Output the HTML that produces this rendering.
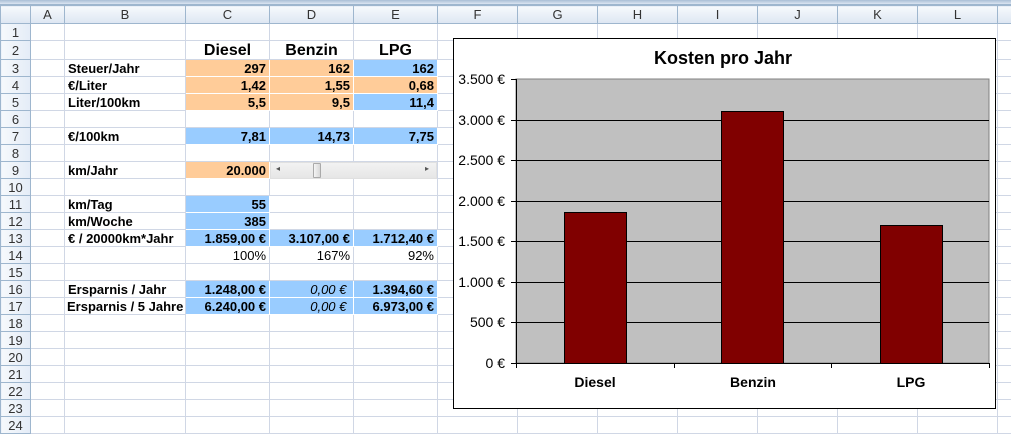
<!DOCTYPE html>
<html><head><meta charset="utf-8"><style>
*{margin:0;padding:0;box-sizing:border-box}
body{width:1011px;height:428px;overflow:hidden;background:#fff;font-family:"Liberation Sans",Arial,sans-serif;position:relative}
.top{position:absolute;left:0;top:0;width:1011px;height:5px;background:linear-gradient(#a9bed6,#dbe5f1);border-bottom:1px solid #9eb6ce}
table{position:absolute;left:0;top:5px;border-collapse:collapse;table-layout:fixed;width:1020px}
td{border:1px solid #d0d7e5;height:17px;font-size:13px;font-weight:bold;padding:0 3px;white-space:nowrap;overflow:hidden;line-height:15px;color:#000}
td.r{text-align:right}
tr.h td{background:linear-gradient(#f6f9fc,#dde6f2);border-color:#9eb6ce;font-weight:normal;text-align:center;font-size:13px;color:#333;height:18px}
td.n{background:linear-gradient(90deg,#f6f9fc,#e4ecf7);border-color:#9eb6ce;font-weight:normal;text-align:center;font-size:13px;color:#333;padding:0}
.o{background:#ffcc99}.b{background:#99ccff}
.o,.b{border-color:transparent}
td.big{font-size:16px;text-align:center;height:19px}
.i{font-style:italic;font-weight:normal}
.nb{font-weight:normal}
</style></head><body>
<div class="top"></div>
<table>
<colgroup><col style="width:30px"><col style="width:34px"><col style="width:121px"><col style="width:84px"><col style="width:84px"><col style="width:84px"><col style="width:80px"><col style="width:80px"><col style="width:80px"><col style="width:80px"><col style="width:80px"><col style="width:80px"><col style="width:80px"><col style="width:23px"></colgroup>
<tr class="h"><td></td><td>A</td><td>B</td><td>C</td><td>D</td><td>E</td><td>F</td><td>G</td><td>H</td><td>I</td><td>J</td><td>K</td><td>L</td><td></td></tr>
<tr><td class="n">1</td><td></td><td></td><td></td><td></td><td></td><td></td><td></td><td></td><td></td><td></td><td></td><td></td><td></td></tr>
<tr><td class="n" style="height:19px">2</td><td></td><td></td><td class="big">Diesel</td><td class="big">Benzin</td><td class="big">LPG</td><td></td><td></td><td></td><td></td><td></td><td></td><td></td><td></td></tr>
<tr><td class="n">3</td><td></td><td>Steuer/Jahr</td><td class="r o">297</td><td class="r o">162</td><td class="r b">162</td><td></td><td></td><td></td><td></td><td></td><td></td><td></td><td></td></tr>
<tr><td class="n">4</td><td></td><td>€/Liter</td><td class="r o">1,42</td><td class="r o">1,55</td><td class="r o">0,68</td><td></td><td></td><td></td><td></td><td></td><td></td><td></td><td></td></tr>
<tr><td class="n">5</td><td></td><td>Liter/100km</td><td class="r o">5,5</td><td class="r o">9,5</td><td class="r b">11,4</td><td></td><td></td><td></td><td></td><td></td><td></td><td></td><td></td></tr>
<tr><td class="n">6</td><td></td><td></td><td></td><td></td><td></td><td></td><td></td><td></td><td></td><td></td><td></td><td></td><td></td></tr>
<tr><td class="n">7</td><td></td><td>€/100km</td><td class="r b">7,81</td><td class="r b">14,73</td><td class="r b">7,75</td><td></td><td></td><td></td><td></td><td></td><td></td><td></td><td></td></tr>
<tr><td class="n">8</td><td></td><td></td><td></td><td></td><td></td><td></td><td></td><td></td><td></td><td></td><td></td><td></td><td></td></tr>
<tr><td class="n">9</td><td></td><td>km/Jahr</td><td class="r o">20.000</td><td></td><td></td><td></td><td></td><td></td><td></td><td></td><td></td><td></td><td></td></tr>
<tr><td class="n">10</td><td></td><td></td><td></td><td></td><td></td><td></td><td></td><td></td><td></td><td></td><td></td><td></td><td></td></tr>
<tr><td class="n">11</td><td></td><td>km/Tag</td><td class="r b">55</td><td></td><td></td><td></td><td></td><td></td><td></td><td></td><td></td><td></td><td></td></tr>
<tr><td class="n">12</td><td></td><td>km/Woche</td><td class="r b">385</td><td></td><td></td><td></td><td></td><td></td><td></td><td></td><td></td><td></td><td></td></tr>
<tr><td class="n">13</td><td></td><td>€ / 20000km*Jahr</td><td class="r b">1.859,00 €</td><td class="r b">3.107,00 €</td><td class="r b">1.712,40 €</td><td></td><td></td><td></td><td></td><td></td><td></td><td></td><td></td></tr>
<tr><td class="n">14</td><td></td><td></td><td class="r nb">100%</td><td class="r nb">167%</td><td class="r nb">92%</td><td></td><td></td><td></td><td></td><td></td><td></td><td></td><td></td></tr>
<tr><td class="n">15</td><td></td><td></td><td></td><td></td><td></td><td></td><td></td><td></td><td></td><td></td><td></td><td></td><td></td></tr>
<tr><td class="n">16</td><td></td><td>Ersparnis / Jahr</td><td class="r b">1.248,00 €</td><td class="r b i">0,00 €&nbsp;</td><td class="r b">1.394,60 €</td><td></td><td></td><td></td><td></td><td></td><td></td><td></td><td></td></tr>
<tr><td class="n">17</td><td></td><td style="padding-left:2px">Ersparnis / 5 Jahre</td><td class="r b">6.240,00 €</td><td class="r b i">0,00 €&nbsp;</td><td class="r b">6.973,00 €</td><td></td><td></td><td></td><td></td><td></td><td></td><td></td><td></td></tr>
<tr><td class="n">18</td><td></td><td></td><td></td><td></td><td></td><td></td><td></td><td></td><td></td><td></td><td></td><td></td><td></td></tr>
<tr><td class="n">19</td><td></td><td></td><td></td><td></td><td></td><td></td><td></td><td></td><td></td><td></td><td></td><td></td><td></td></tr>
<tr><td class="n">20</td><td></td><td></td><td></td><td></td><td></td><td></td><td></td><td></td><td></td><td></td><td></td><td></td><td></td></tr>
<tr><td class="n">21</td><td></td><td></td><td></td><td></td><td></td><td></td><td></td><td></td><td></td><td></td><td></td><td></td><td></td></tr>
<tr><td class="n">22</td><td></td><td></td><td></td><td></td><td></td><td></td><td></td><td></td><td></td><td></td><td></td><td></td><td></td></tr>
<tr><td class="n">23</td><td></td><td></td><td></td><td></td><td></td><td></td><td></td><td></td><td></td><td></td><td></td><td></td><td></td></tr>
<tr><td class="n">24</td><td></td><td></td><td></td><td></td><td></td><td></td><td></td><td></td><td></td><td></td><td></td><td></td><td></td></tr>
</table>
<!-- scrollbar -->
<div style="position:absolute;left:270px;top:162px;width:167px;height:17px;background:linear-gradient(#f2f2f2,#e6e6e6);border:1px solid #e0e0e0"></div>
<div style="position:absolute;left:276px;top:164px;font-size:8px;color:#555">◂</div>
<div style="position:absolute;left:425px;top:164px;font-size:8px;color:#555">▸</div>
<div style="position:absolute;left:313px;top:163px;width:8px;height:15px;background:linear-gradient(90deg,#f4f4f4,#d8d8d8);border:1px solid #aaa;border-radius:1px"></div>
<!-- chart -->
<svg style="position:absolute;left:0;top:0" width="1011" height="428" font-family="Liberation Sans,Arial,sans-serif">
<rect x="453.5" y="38.5" width="542" height="370" fill="#fff" stroke="#000" stroke-width="1"/>
<text x="723" y="64" font-size="18" font-weight="bold" text-anchor="middle">Kosten pro Jahr</text>
<rect x="516" y="79" width="473" height="284" fill="#c0c0c0" stroke="#808080"/>
<g stroke="#000" stroke-width="1">
<line x1="516" y1="120.5" x2="989" y2="120.5"/><line x1="516" y1="160.5" x2="989" y2="160.5"/><line x1="516" y1="201.5" x2="989" y2="201.5"/><line x1="516" y1="241.5" x2="989" y2="241.5"/><line x1="516" y1="282.5" x2="989" y2="282.5"/><line x1="516" y1="322.5" x2="989" y2="322.5"/>
<line x1="511" y1="79.5" x2="516" y2="79.5"/><line x1="511" y1="120.5" x2="516" y2="120.5"/><line x1="511" y1="160.5" x2="516" y2="160.5"/><line x1="511" y1="201.5" x2="516" y2="201.5"/><line x1="511" y1="241.5" x2="516" y2="241.5"/><line x1="511" y1="282.5" x2="516" y2="282.5"/><line x1="511" y1="322.5" x2="516" y2="322.5"/><line x1="511" y1="363.5" x2="989" y2="363.5"/>
<line x1="516.5" y1="79" x2="516.5" y2="368"/><line x1="674.5" y1="363" x2="674.5" y2="368"/><line x1="831.5" y1="363" x2="831.5" y2="368"/><line x1="989.5" y1="363" x2="989.5" y2="368"/>
</g>
<g fill="#800000" stroke="#000">
<rect x="564.5" y="212.5" width="62" height="151"/>
<rect x="721.5" y="111.5" width="62" height="252"/>
<rect x="880.5" y="225.5" width="62" height="138"/>
</g>
<g font-size="14" text-anchor="end">
<text x="505" y="84">3.500 €</text><text x="505" y="125">3.000 €</text><text x="505" y="165">2.500 €</text><text x="505" y="206">2.000 €</text><text x="505" y="246">1.500 €</text><text x="505" y="287">1.000 €</text><text x="505" y="327">500 €</text><text x="505" y="368">0 €</text>
</g>
<g font-size="14" font-weight="bold" text-anchor="middle">
<text x="595" y="387">Diesel</text><text x="753" y="387">Benzin</text><text x="911" y="387">LPG</text>
</g>
</svg>
</body></html>
